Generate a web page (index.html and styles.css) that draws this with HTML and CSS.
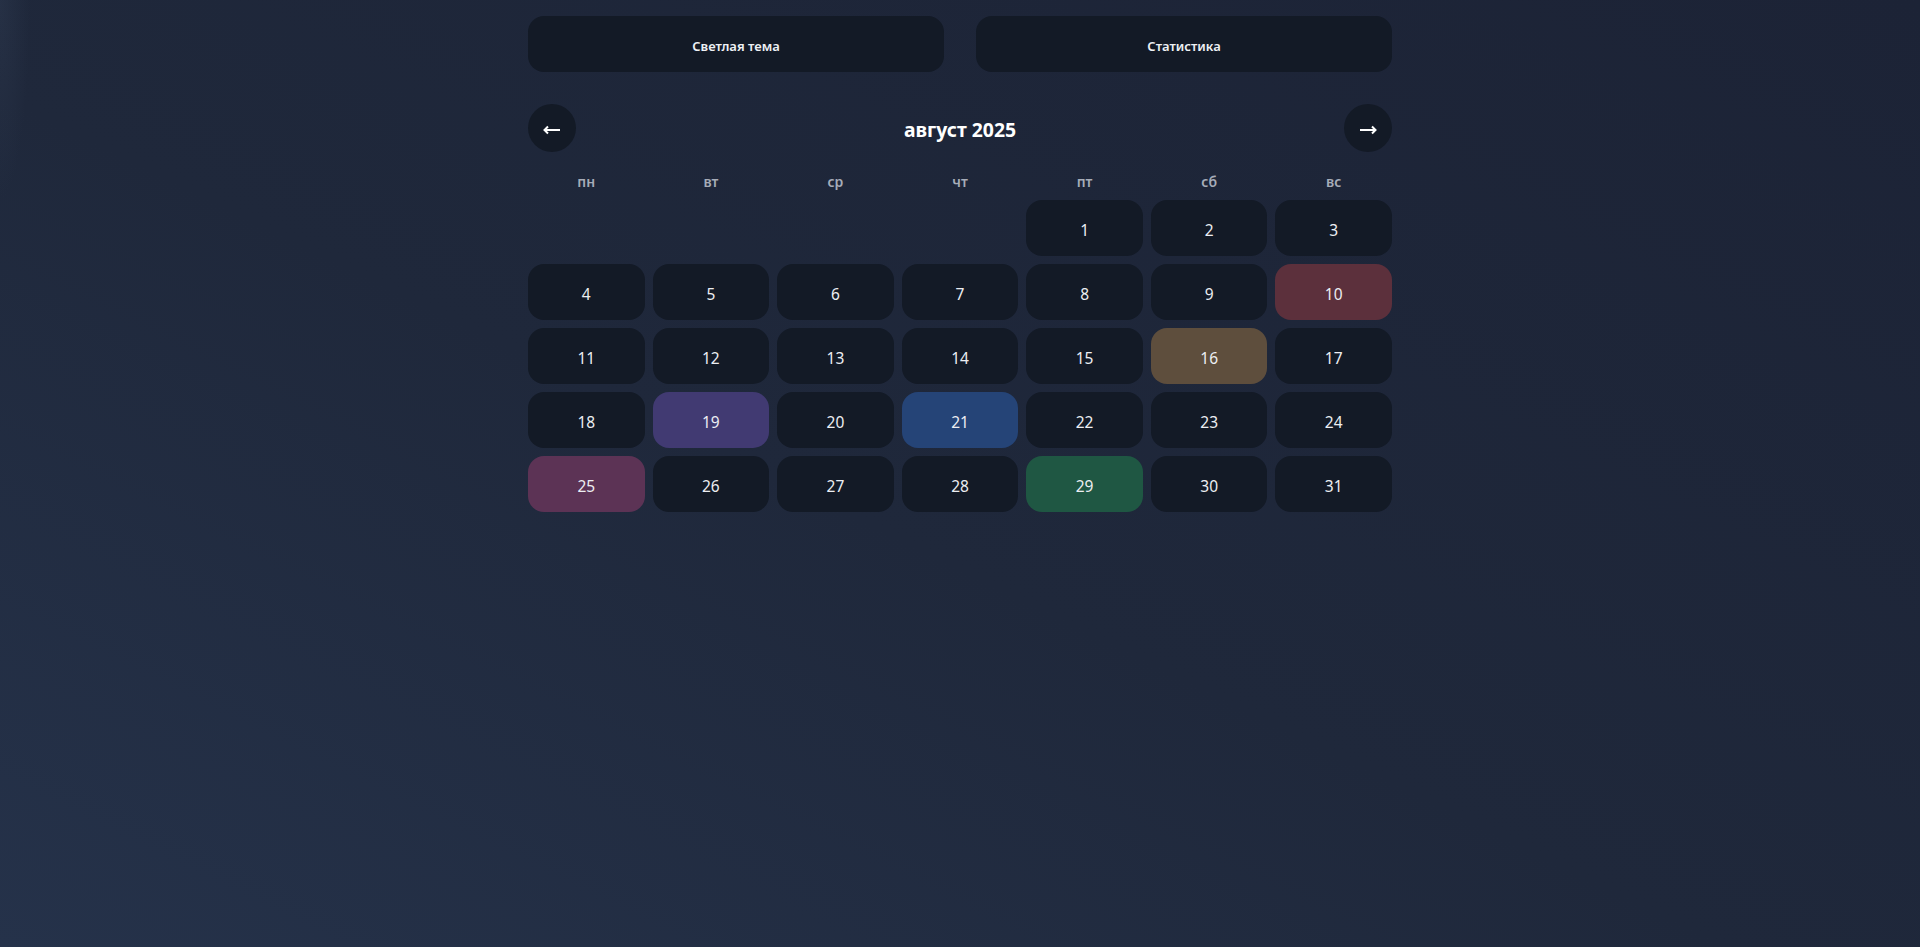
FILE: index.html
```html
<!DOCTYPE html>
<html lang="ru">
<head>
<meta charset="utf-8">
<title>Календарь</title>
<link rel="stylesheet" href="styles.css">
</head>
<body>
<div class="app">
  <div class="top-actions">
    <button class="action-btn">Светлая тема</button>
    <button class="action-btn">Статистика</button>
  </div>
  <div class="month-nav">
    <button class="nav-btn nav-prev" aria-label="Предыдущий месяц">
      <svg width="18" height="10" viewBox="0 0 18 10"><path d="M1.5 5H17M5 1.5L1.5 5L5 8.5" fill="none" stroke="#fff" stroke-width="2"/></svg>
    </button>
    <h1 class="month-title">август 2025</h1>
    <button class="nav-btn nav-next" aria-label="Следующий месяц">
      <svg width="18" height="10" viewBox="0 0 18 10"><path d="M1 5H16.5M13 1.5L16.5 5L13 8.5" fill="none" stroke="#fff" stroke-width="2"/></svg>
    </button>
  </div>
  <div class="weekdays">
    <div class="wd">пн</div><div class="wd">вт</div><div class="wd">ср</div><div class="wd">чт</div><div class="wd">пт</div><div class="wd">сб</div><div class="wd">вс</div>
  </div>
  <div class="days">
    <div class="empty"></div><div class="empty"></div><div class="empty"></div><div class="empty"></div>
    <div class="day">1</div><div class="day">2</div><div class="day">3</div>
    <div class="day">4</div><div class="day">5</div><div class="day">6</div><div class="day">7</div><div class="day">8</div><div class="day">9</div><div class="day red">10</div>
    <div class="day">11</div><div class="day">12</div><div class="day">13</div><div class="day">14</div><div class="day">15</div><div class="day brown">16</div><div class="day">17</div>
    <div class="day">18</div><div class="day purple">19</div><div class="day">20</div><div class="day blue">21</div><div class="day">22</div><div class="day">23</div><div class="day">24</div>
    <div class="day plum">25</div><div class="day">26</div><div class="day">27</div><div class="day">28</div><div class="day green">29</div><div class="day">30</div><div class="day">31</div>
  </div>
</div>
</body>
</html>
```
FILE: styles.css
```css
* { box-sizing: border-box; }
html, body { height: 100%; }
body {
  margin: 0;
  font-family: "Noto Sans", "Open Sans", sans-serif;
  color: #eef0f4;
  background:
    radial-gradient(ellipse 30px 200px at 0 0, rgba(60,75,100,0.25), transparent),
    linear-gradient(to top right, #25324a 0%, #1f283b 45%, #1c2336 100%);
  min-height: 947px;
}
.app {
  width: 864px;
  margin: 0 auto;
  padding-top: 16px;
}
.top-actions {
  display: grid;
  grid-template-columns: 1fr 1fr;
  gap: 32px;
}
.action-btn {
  height: 56px;
  border: none;
  border-radius: 16px;
  background: #131a26;
  color: #eef0f4;
  font-family: inherit;
  font-weight: 600;
  font-size: 13px;
  padding: 4px 0 0;
}
.month-nav {
  display: flex;
  align-items: center;
  justify-content: space-between;
  margin-top: 32px;
  height: 48px;
}
.nav-btn {
  width: 48px;
  height: 48px;
  border-radius: 50%;
  border: none;
  background: #131a26;
  padding: 4px 0 0;
  display: flex;
  align-items: center;
  justify-content: center;
}
.nav-prev svg { margin-left: -1px; }
.month-title {
  margin: 0;
  padding-top: 3px;
  font-size: 19.4px;
  font-weight: 700;
  color: #ffffff;
}
.weekdays {
  display: grid;
  grid-template-columns: repeat(7, 1fr);
  gap: 8px;
  margin-top: 20px;
}
.wd {
  text-align: center;
  font-size: 14px;
  font-weight: 600;
  color: #a6acb8;
  height: 20px;
  line-height: 20px;
}
.days {
  display: grid;
  grid-template-columns: repeat(7, 1fr);
  gap: 8px;
  margin-top: 8px;
}
.day {
  height: 56px;
  border-radius: 16px;
  background: #131a26;
  display: flex;
  align-items: center;
  justify-content: center;
  padding-top: 3px;
  font-size: 15.5px;
  color: #eceef2;
}
.empty { height: 56px; }
.red { background: #5c303c; }
.brown { background: #5e4e3d; }
.purple { background: #413a72; }
.blue { background: #254477; }
.plum { background: #5c3355; }
.green { background: #1f5743; }
```
